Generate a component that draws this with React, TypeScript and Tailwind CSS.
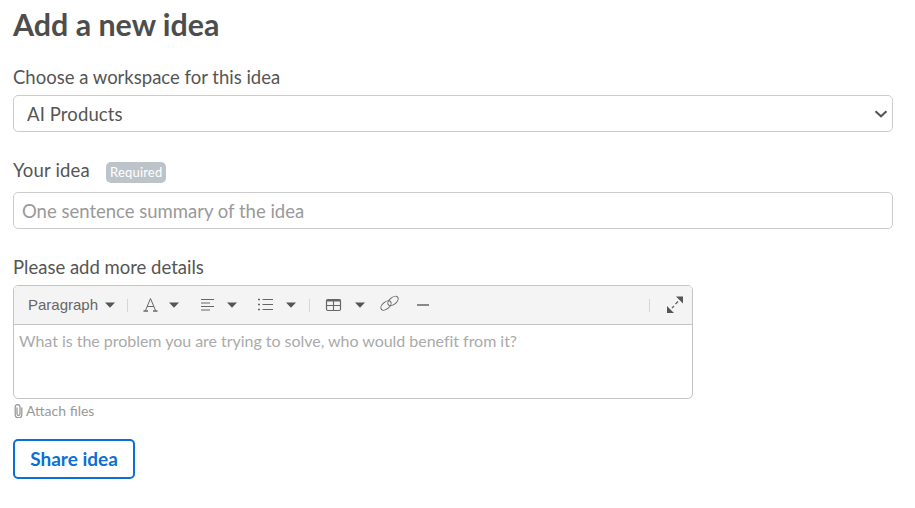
import type { ReactNode } from 'react'

function Caret({ className = '' }: { className?: string }) {
  return (
    <svg width="10" height="6" viewBox="0 0 10 6" className={`shrink-0 text-[#555] ${className}`}>
      <path d="M0 0.500h10L5 5.800z" fill="currentColor" />
    </svg>
  )
}

function Sep({ className = '' }: { className?: string }) {
  return <span className={`h-[13px] w-px shrink-0 bg-[#d6d6d6] ${className}`} />
}

function ToolIcon({ className = '', children }: { className?: string; children: ReactNode }) {
  return (
    <svg width="20" height="20" viewBox="0 0 20 20" fill="none" stroke="#666" strokeWidth="1" className={`shrink-0 ${className}`}>
      {children}
    </svg>
  )
}

export default function App() {
  return (
    <div className="h-[508px] w-[915px] bg-white px-[13px] font-['Lato',sans-serif] text-[#555]">
      <h1 className="pt-[6px] text-[30.4px] leading-[36px] font-bold text-[#4d4d4d]">Add a new idea</h1>

      <label className="mt-[22px] block text-[18.5px] leading-[27px]">Choose a workspace for this idea</label>
      <div className="relative mt-[4px] h-[37px] w-[880px]">
        <select className="block h-full w-full appearance-none rounded-[5px] border border-[#ccc] bg-white pt-[2px] pl-[13px] text-[18.5px] tracking-[0.12px] text-[#555]">
          <option>AI Products</option>
        </select>
        <svg width="14" height="8" viewBox="0 0 14 8" fill="none" stroke="#555" strokeWidth="2" className="pointer-events-none absolute top-[15px] right-[5px]">
          <path d="M1.500 1.200 7 6.300l5.500-5.100" />
        </svg>
      </div>

      <div className="mt-[24px] flex h-[27px] items-center">
        <span className="mt-[2px] text-[18.5px] leading-[25px] tracking-[0.2px]">Your idea</span>
        <span className="mt-[6px] ml-[16px] rounded-[5px] bg-[#bcc4c9] px-[4px] text-[13px] leading-[21px] tracking-[0.2px] text-white">Required</span>
      </div>
      <input
        placeholder="One sentence summary of the idea"
        className="mt-[9px] block h-[37px] w-[880px] rounded-[5px] border border-[#ccc] px-[8px] text-[18.5px] outline-none placeholder:text-[#999]"
      />

      <label className="mt-[25px] block text-[18.5px] leading-[27px]">Please add more details</label>
      <div className="mt-[4px] h-[114px] w-[680px] overflow-hidden rounded-[5px] border border-[#c4c4c4]">
        <div className="flex h-[39px] items-center border-b border-[#c4c4c4] bg-[#f4f4f4] pr-[7px] pl-[14px] font-['Liberation_Sans',sans-serif] text-[#666]">
          <span className="text-[15px]">Paragraph</span>
          <Caret className="ml-[7px]" />
          <Sep className="ml-[12px]" />
          <ToolIcon className="ml-[12px]">
            <path d="M5.500 15.500 10.500 3.500l5 12M7.200 11.500h6.600" />
            <path d="M3.500 16h4.500M13 16h4.500" strokeWidth="1.400" />
          </ToolIcon>
          <Caret className="ml-[9px]" />
          <ToolIcon className="ml-[19px]">
            <path d="M3 4.500h13M3 8h9M3 11.500h13M3 15h9" />
          </ToolIcon>
          <Caret className="ml-[9px]" />
          <ToolIcon className="ml-[19px]">
            <path d="M6.500 4.500H17M6.500 9.500H17M6.500 14.500H17" />
            <path d="M2 4.500h2M2 9.500h2M2 14.500h2" strokeWidth="1.500" />
          </ToolIcon>
          <Caret className="ml-[10px]" />
          <Sep className="ml-[13px]" />
          <ToolIcon className="ml-[14px]">
            <rect x="2.500" y="4.500" width="14" height="11" rx="1.500" strokeWidth="1.200" />
            <path d="M2.500 5.500h14" strokeWidth="2" />
            <path d="M2.500 10.500h14M9.500 5.500v10" strokeWidth="1.100" />
          </ToolIcon>
          <Caret className="ml-[11px]" />
          <ToolIcon className="ml-[14px]">
            <ellipse cx="7" cy="10.500" rx="6" ry="3.500" transform="rotate(-40 7 10.500)" />
            <ellipse cx="14" cy="6" rx="6" ry="3.500" transform="rotate(-40 14 6)" />
          </ToolIcon>
          <ToolIcon className="ml-[13px]">
            <path d="M5 10h12" strokeWidth="1.300" />
          </ToolIcon>
          <Sep className="ml-auto" />
          <ToolIcon className="ml-[15px]">
            <path d="M13 6.500 10.500 9M7 13l2-2" strokeWidth="1.400" />
            <path d="M11 1.500h7V8.500zM2 11v7h7z" fill="#555" stroke="none" />
          </ToolIcon>
        </div>
        <p className="px-[5px] pt-[6px] text-[16px] leading-[20px] tracking-[-0.03px] text-[#aaa]">What is the problem you are trying to solve, who would benefit from it?</p>
      </div>

      <div className="mt-[3px] flex h-[17px] items-center text-[14px] text-[#999]">
        <svg width="11" height="14" viewBox="0 0 11 14" fill="none" stroke="#999" strokeWidth="1.300" className="mr-[2px]">
          <path d="M4 3.500V10a1.500 1.500 0 0 0 3 0V3a2.300 2.300 0 0 0-4.800 0v7.500a3.300 3.300 0 0 0 6.600 0V3.500" />
        </svg>
        Attach files
      </div>

      <button className="mt-[20px] h-[40px] w-[122px] rounded-[5px] border-2 border-[#0a6fd6] bg-white text-[19px] font-bold text-[#0a6fd6]">
        Share idea
      </button>
    </div>
  )
}
